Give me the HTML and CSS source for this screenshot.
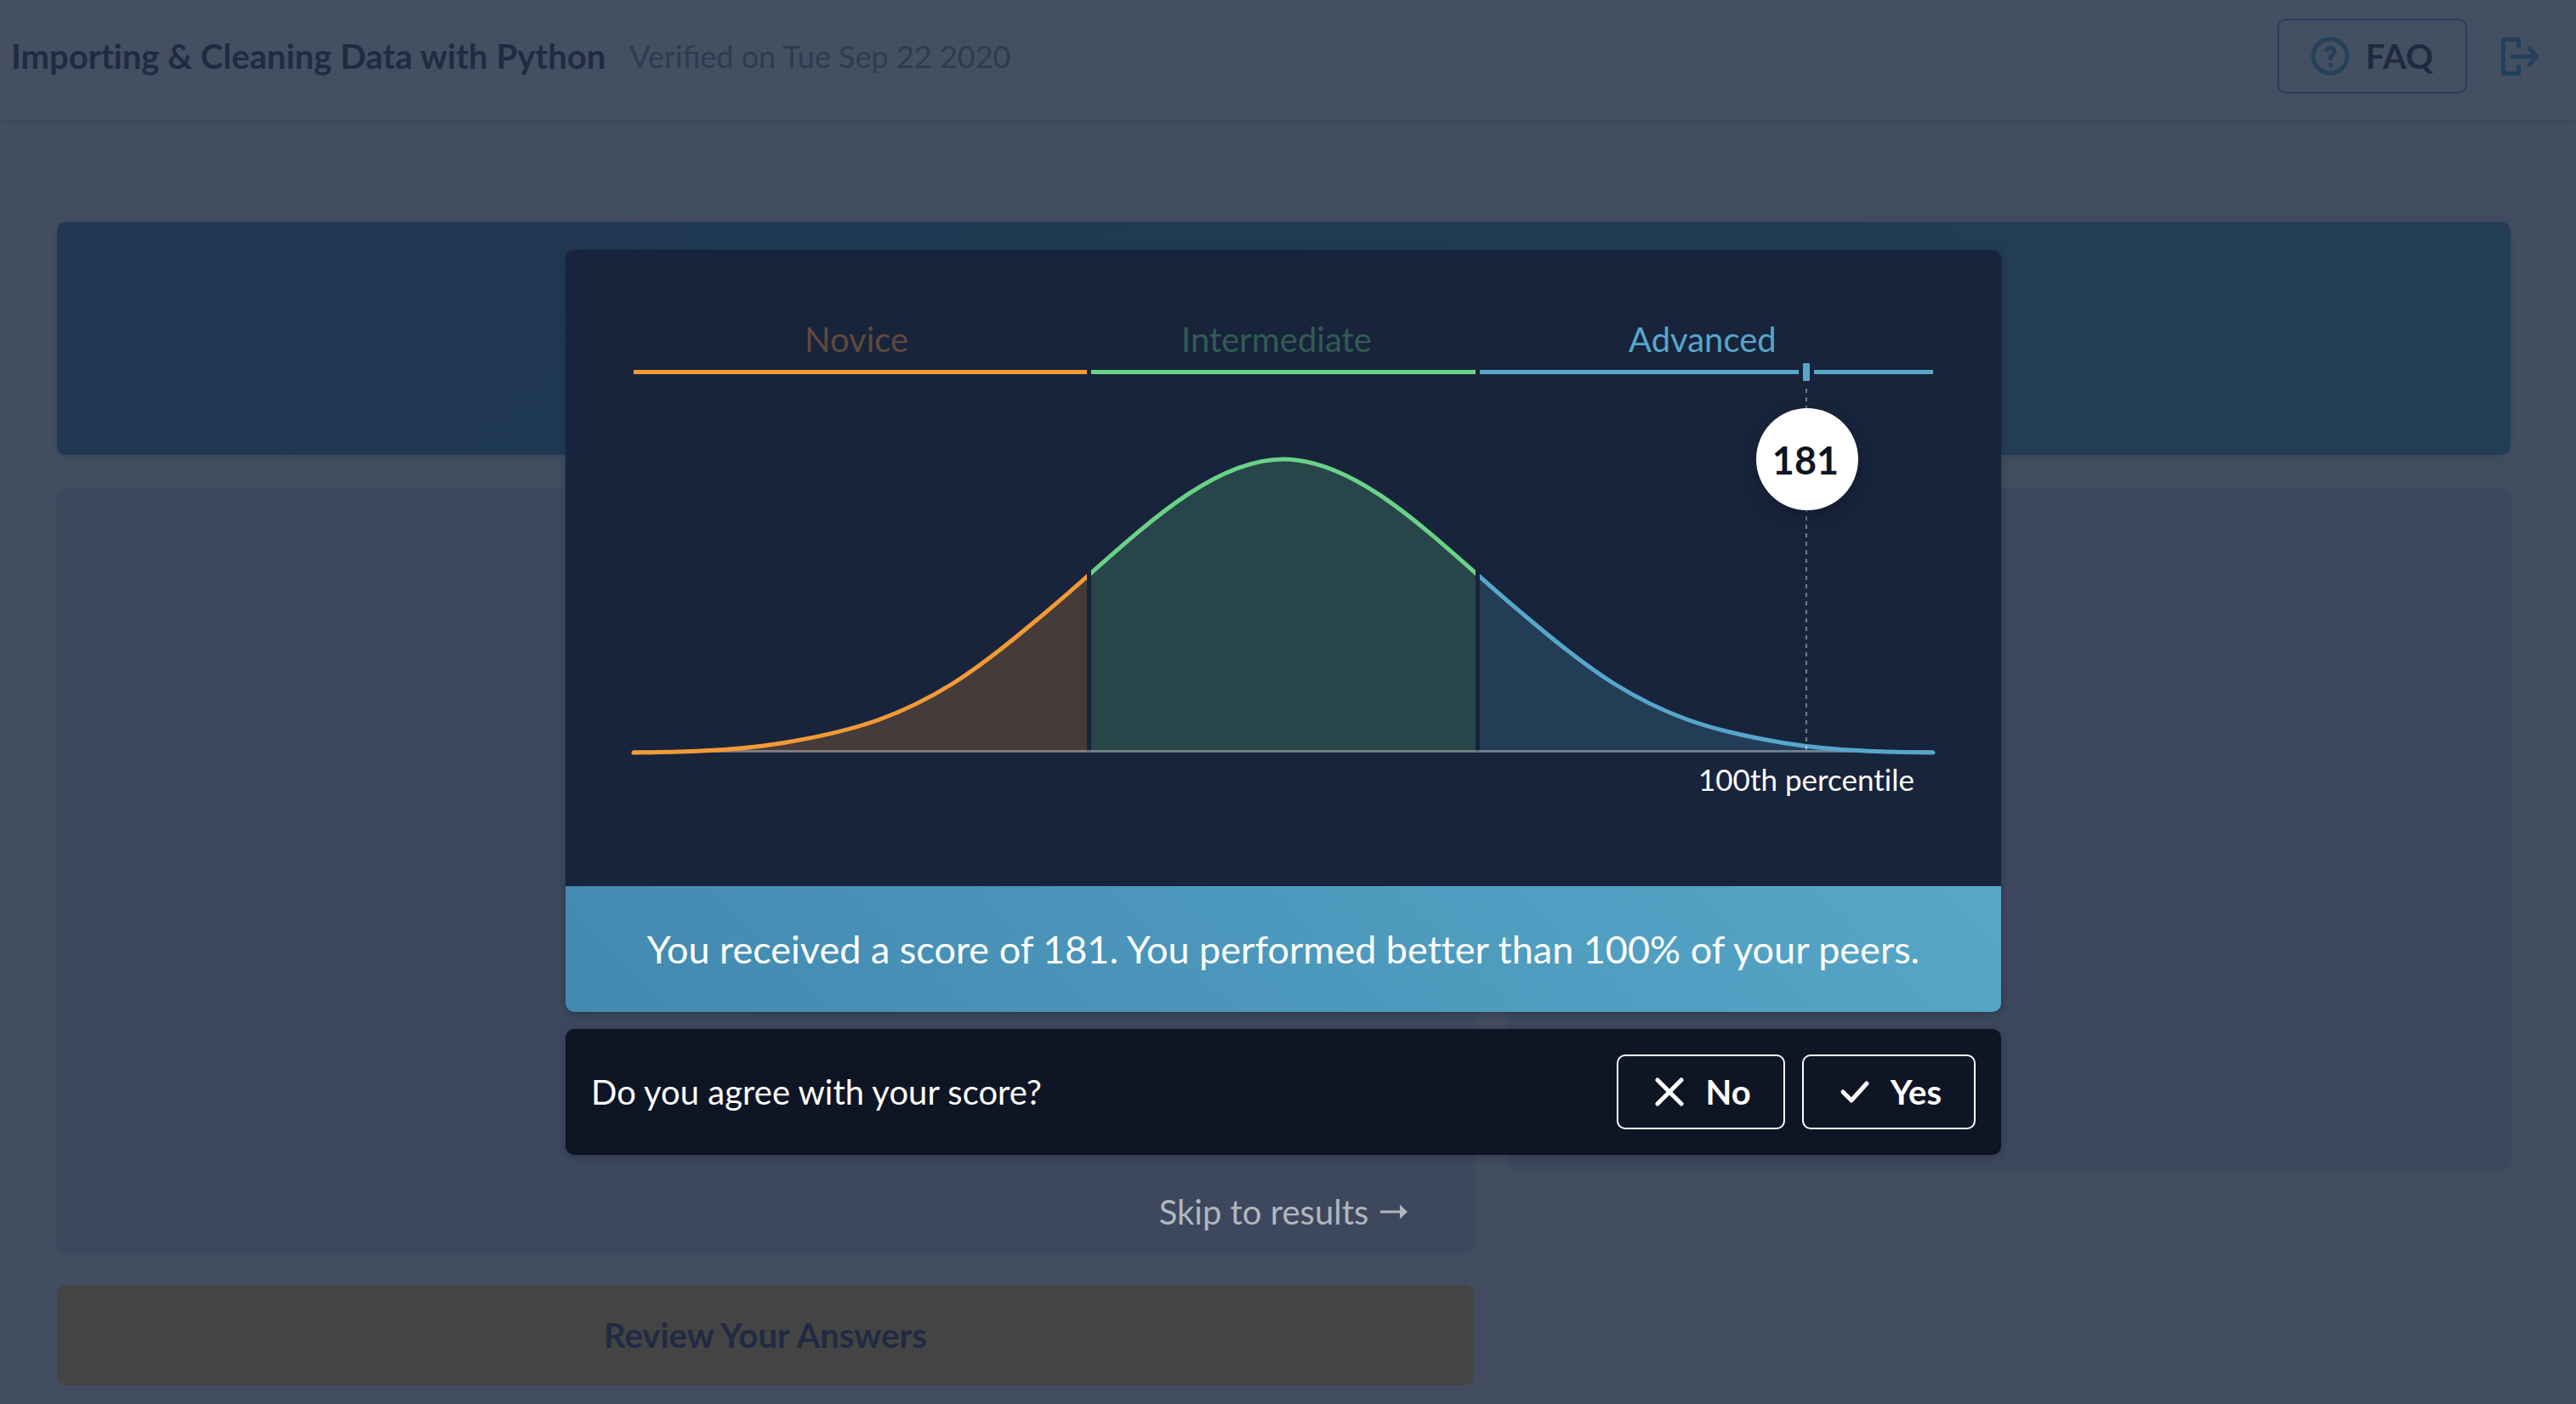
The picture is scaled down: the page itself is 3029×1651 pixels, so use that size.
FILE: index.html
```html
<!DOCTYPE html>
<html lang="en">
<head>
<meta charset="utf-8">
<title>Importing &amp; Cleaning Data with Python</title>
<link rel="stylesheet" href="styles.css">
</head>
<body>
<header class="header">
  <div class="heading">
    <h1 class="title">Importing &amp; Cleaning Data with Python</h1>
    <span class="verified">Verified on Tue Sep 22 2020</span>
  </div>
  <div class="actions">
    <button class="button button-faq" type="button">
      <svg class="icon" viewBox="0 0 44 44" aria-hidden="true">
        <circle cx="22" cy="22" r="20" fill="none" stroke="currentColor" stroke-width="5"/>
        <path d="M17.500 14.500Q22 10.500 25.500 13.500Q28.500 18 24.500 20.500Q22 22 22.500 25" fill="none" stroke="currentColor" stroke-width="5" stroke-linecap="round"/>
        <circle cx="22.500" cy="32.500" r="2.700" fill="currentColor"/>
      </svg>
      <span class="faq-label">FAQ</span>
    </button>
    <a class="exit" href="#exit" aria-label="Exit">
      <svg class="icon" viewBox="0 0 44 44" aria-hidden="true">
        <path d="M20.500 10.500V2.500H2.500V42.500H20.500V34.500M13 22.500H40M33 13L42 22.500L33 32" fill="none" stroke="currentColor" stroke-width="5" stroke-linecap="round" stroke-linejoin="round"/>
      </svg>
    </a>
  </div>
</header>

<main class="content">
  <section class="banner"></section>
  <div class="columns">
    <div class="column">
      <section class="card card-tall"></section>
      <button class="review" type="button">Review Your Answers</button>
    </div>
    <div class="column">
      <section class="card card-short"></section>
    </div>
  </div>
</main>

<div class="overlay" role="dialog" aria-label="Your score">
  <section class="result">
    <svg class="chart" viewBox="0 0 1688 748" role="img" aria-label="Score distribution">
      <defs>
        <path id="curve" d="M80 591C105 591 130 590.300 155 589.300C188 588 222 585 255 579.700C293 573.500 330 566 368 552.500C397 542 426 528 455 510C486 490.500 517 466 548 440C571 421 593 402 616 381.500C692 314 768 246 844 246C920 246 996 314 1072 381.500C1095 402 1117 421 1140 440C1171 466 1202 490.500 1233 510C1262 528 1291 542 1320 552.500C1358 566 1395 573.500 1433 579.700C1466 585 1500 588 1533 589.300C1558 590.300 1583 591 1608 591"/>
        <clipPath id="novice"><rect x="0" y="200" width="613" height="420"/></clipPath>
        <clipPath id="intermediate"><rect x="618" y="200" width="452" height="420"/></clipPath>
        <clipPath id="advanced"><rect x="1075" y="200" width="613" height="420"/></clipPath>
        <clipPath id="above"><rect x="0" y="200" width="1688" height="390"/></clipPath>
      </defs>
      <text class="level level-novice" x="281" y="120">Novice</text>
      <text class="level level-intermediate" x="724" y="120">Intermediate</text>
      <text class="level level-advanced" x="1250" y="120">Advanced</text>
      <rect class="bg-novice" x="80" y="141" width="533" height="5"/>
      <rect class="bg-intermediate" x="618" y="141" width="452" height="5"/>
      <rect class="bg-advanced" x="1075" y="141" width="375" height="5"/>
      <rect class="bg-advanced" x="1468" y="141" width="140" height="5"/>
      <rect class="bg-advanced" x="1455" y="133" width="8" height="21" rx="1"/>
      <g clip-path="url(#above)">
        <use class="area bg-novice" href="#curve" clip-path="url(#novice)"/>
        <use class="area bg-intermediate" href="#curve" clip-path="url(#intermediate)"/>
        <use class="area bg-advanced" href="#curve" clip-path="url(#advanced)"/>
      </g>
      <path class="baseline" d="M80 589.500H1608"/>
      <use class="line line-novice" href="#curve" clip-path="url(#novice)"/>
      <use class="line line-intermediate" href="#curve" clip-path="url(#intermediate)"/>
      <use class="line line-advanced" href="#curve" clip-path="url(#advanced)"/>
      <path class="guide" d="M1459 163V590"/>
      <circle class="marker" cx="1460" cy="246" r="60"/>
      <text class="score" x="1458" y="264">181</text>
      <text class="percentile" x="1332" y="636">100th percentile</text>
    </svg>
    <p class="message">You received a score of 181. You performed better than 100% of your peers.</p>
  </section>
  <section class="feedback">
    <p class="question">Do you agree with your score?</p>
    <div class="answers">
      <button class="button" type="button">
        <svg class="icon" viewBox="0 0 44 44" aria-hidden="true">
          <path d="M8 8L36 36M36 8L8 36" fill="none" stroke="currentColor" stroke-width="5" stroke-linecap="round"/>
        </svg>
        <span>No</span>
      </button>
      <button class="button" type="button">
        <svg class="icon" viewBox="0 0 44 44" aria-hidden="true">
          <path d="M8 22L18 32L36 12" fill="none" stroke="currentColor" stroke-width="5" stroke-linecap="round" stroke-linejoin="round"/>
        </svg>
        <span>Yes</span>
      </button>
    </div>
  </section>
  <a class="skip" href="#results">Skip to results
    <svg class="arrow" viewBox="0 0 32 18" aria-hidden="true">
      <path d="M0 7.500H23V0.500L32 9L23 17.500V10.500H0Z" fill="currentColor"/>
    </svg>
  </a>
</div>
</body>
</html>
```

FILE: styles.css
```css
* {
  box-sizing: border-box;
}

body {
  margin: 0;
  background: #434d60;
  font-family: Lato, sans-serif;
  font-size: 40px;
  font-variant-ligatures: no-common-ligatures;
  line-height: 48px;
}

h1,
p {
  margin: 0;
  font-size: inherit;
}

button {
  font: inherit;
}

.header {
  display: flex;
  justify-content: space-between;
  align-items: flex-start;
  height: 141px;
  padding: 22px 44px 0 13px;
  background: #454f62;
  box-shadow: 0 1px 4px #3c4659;
}

.heading {
  display: flex;
  align-items: center;
  gap: 28px;
  height: 88px;
}

.title {
  color: #202b43;
  font-weight: 700;
}

.verified {
  color: #2e3b50;
  font-size: 36px;
  font-variant-ligatures: normal;
  line-height: 40px;
}

.actions {
  display: flex;
  align-items: center;
  gap: 40px;
}

.icon {
  display: block;
  width: 44px;
  height: 44px;
  overflow: visible;
}

.button {
  display: flex;
  align-items: center;
  gap: 20px;
  height: 88px;
  padding: 0 38px;
  border: 2px solid currentColor;
  border-radius: 10px;
  background: none;
  color: #fff;
  font-weight: 700;
}

.button-faq,
.exit {
  color: #24405b;
}

.faq-label {
  color: #1f2940;
}

.content {
  display: flex;
  flex-direction: column;
  gap: 40px;
  padding: 120px 77px 22px 67px;
}

.banner {
  height: 274px;
  border-radius: 10px;
  background: linear-gradient(135deg, #213652, #203a54 35%, #233d57 75%, #233d54);
  box-shadow: 0 1px 6px #3c4659;
}

.columns {
  display: grid;
  grid-template-columns: 1666fr 1179fr;
  gap: 40px;
}

.column {
  display: flex;
  flex-direction: column;
  gap: 38px;
}

.card {
  border-radius: 10px;
  background: #3d485e;
  box-shadow: 0 1px 6px #3e495c;
}

.card-tall {
  height: 898px;
}

.card-short {
  height: 800px;
}

.review {
  height: 118px;
  border: 0;
  border-radius: 10px;
  background: #444444;
  color: #202a43;
  font-weight: 700;
}

.overlay {
  position: absolute;
  top: 0;
  left: 0;
  display: flex;
  flex-direction: column;
  align-items: center;
  gap: 20px;
  width: 100%;
  padding: 294px 11px 0 0;
}

.result,
.feedback {
  width: 100%;
  max-width: 1688px;
  border-radius: 10px;
  box-shadow: 0 2px 10px rgba(20, 30, 40, 0.4);
}

.result {
  overflow: hidden;
  background: #18243b;
}

.chart {
  display: block;
  width: 100%;
}

.level {
  font-size: 40px;
}

.level-novice {
  fill: #5e4a3c;
}

.level-intermediate {
  fill: #315b53;
}

.level-advanced {
  fill: #56a7ca;
}

.bg-novice {
  fill: #f39a36;
}

.bg-intermediate {
  fill: #6ad287;
}

.bg-advanced {
  fill: #56a7ca;
}

.area {
  opacity: 0.2;
}

.line {
  fill: none;
  stroke-width: 5;
  stroke-linecap: round;
}

.line-novice {
  stroke: #f39a36;
}

.line-intermediate {
  stroke: #6ad287;
}

.line-advanced {
  stroke: #56a7ca;
}

.baseline {
  stroke: #fff;
  stroke-width: 3;
  opacity: 0.35;
}

.guide {
  stroke: #fff;
  stroke-width: 2;
  stroke-dasharray: 5 5;
  opacity: 0.4;
}

.marker {
  fill: #fff;
  filter: drop-shadow(0 6px 8px rgba(14, 20, 36, 0.5));
}

.score {
  fill: #0e1524;
  font-size: 45px;
  font-weight: 700;
  text-anchor: middle;
}

.percentile {
  fill: #fff;
  font-size: 35px;
}

.message {
  padding: 46px 20px;
  background: linear-gradient(45deg, #4289af, #56a7c8);
  color: #fff;
  font-size: 45px;
  line-height: 56px;
  text-align: center;
}

.feedback {
  display: flex;
  justify-content: space-between;
  align-items: center;
  padding: 30px;
  background: #0e1524;
  color: #fff;
}

.answers {
  display: flex;
  gap: 20px;
}

.skip {
  display: flex;
  align-items: center;
  gap: 14px;
  margin-top: 23px;
  color: #b1b6bf;
  text-decoration: none;
}

.arrow {
  width: 32px;
  height: 18px;
}
```
